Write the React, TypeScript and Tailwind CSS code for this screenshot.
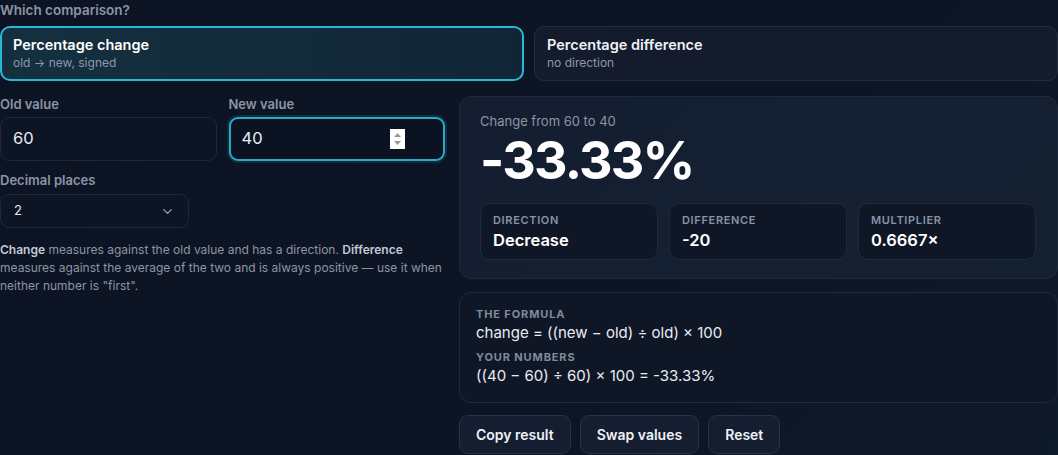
import { ChevronDown } from "lucide-react";

const font = { fontFamily: "Inter, 'Noto Sans', sans-serif" };

function Stat({ label, value }: { label: string; value: string }) {
  return (
    <div className="h-[57px] rounded-[10px] border border-[#1f2a3d] bg-[#0f1727] px-3 pt-[9px]">
      <div className="text-[11px] font-semibold uppercase leading-[14px] tracking-[0.06em] text-[#8793a6]">{label}</div>
      <div className="mt-[2px] text-[16.5px] font-semibold leading-[22px] text-white">{value}</div>
    </div>
  );
}

export default function App() {
  return (
    <div
      style={font}
      className="h-[455px] w-[1058px] overflow-hidden bg-[linear-gradient(135deg,#0c1322_0%,#0d1424_60%,#0f1a28_100%)] text-white"
    >
      <div className="pt-[1px] text-[13.5px] font-semibold leading-[18px] text-[#8b95a7]">Which comparison?</div>

      <div className="mt-[7px] grid grid-cols-2 gap-[10px]">
        <div className="h-[55px] rounded-[10px] border-2 border-[#2bb8d6] bg-[linear-gradient(90deg,#14303f_0%,#132a3b_60%,#112536_100%)] px-[11px] pt-[8px]">
          <div className="text-[14.5px] font-semibold leading-[18px] text-white">Percentage change</div>
          <div className="text-[12px] leading-[17px] text-[#8c98aa]">old → new, signed</div>
        </div>
        <div className="h-[55px] rounded-[10px] border border-[#222d40] bg-[#131b2c] px-[12px] pt-[9px]">
          <div className="text-[14.5px] font-semibold leading-[18px] text-[#eef2f7]">Percentage difference</div>
          <div className="text-[12px] leading-[17px] text-[#8c98aa]">no direction</div>
        </div>
      </div>

      <div className="mt-[15px] grid grid-cols-[445px_599px] gap-[14px]">
        <div>
          <div className="grid grid-cols-2 gap-[12px]">
            <div>
              <div className="text-[13px] font-semibold leading-[16px] text-[#8b95a7]">Old value</div>
              <div className="mt-[5px] flex h-[44px] items-center rounded-[9px] border border-[#1e2839] bg-[#0d1424] px-[12px] pb-[2px] text-[16.5px] text-[#e8edf3]">
                60
              </div>
            </div>
            <div>
              <div className="text-[13px] font-semibold leading-[16px] text-[#8b95a7]">New value</div>
              <div className="mt-[5px] flex h-[44px] items-center justify-between rounded-[9px] border-2 border-[#2aa9c6] bg-[#0b1322] pl-[11px] pr-[38px] text-[16.5px] text-[#e8edf3] shadow-[0_0_0_2px_rgba(34,160,190,0.18)]">
                <span className="pb-[2px]">40</span>
                <svg width="15" height="20" viewBox="0 0 15 20">
                  <rect width="15" height="20" fill="#ffffff" />
                  <path d="M4 8 L7.5 4 L11 8 Z" fill="#9a9a9a" />
                  <path d="M4 12 L7.5 16 L11 12 Z" fill="#9a9a9a" />
                </svg>
              </div>
            </div>
          </div>

          <div className="mt-[10px] text-[13px] font-semibold leading-[18px] text-[#8b95a7]">Decimal places</div>
          <div className="mt-[5px] flex h-[34px] w-[189px] items-center justify-between rounded-[9px] border border-[#1e2839] bg-[#0d1424] pl-[13px] pr-[13px] text-[13px] text-[#e8edf3]">
            <span>2</span>
            <ChevronDown size={15} strokeWidth={2} className="text-[#9aa4b4]" />
          </div>

          <p className="mt-[13px] text-[12px] leading-[18px] text-[#8b95a7]">
            <b className="font-semibold text-[#c3cad5]">Change</b> measures against the old value and has a direction.{" "}
            <b className="font-semibold text-[#c3cad5]">Difference</b> measures against the average of the two and is always positive — use it when neither number is "first".
          </p>
        </div>

        <div>
          <div className="h-[183px] rounded-[12px] border border-[#1f2a3d] bg-[linear-gradient(135deg,#141d30_0%,#152033_60%,#13202f_100%)] px-[20px] pt-[15px]">
            <div className="text-[13px] leading-[18px] text-[#8b95a7]">Change from 60 to 40</div>
            <div className="mt-[-1px] text-[52px] font-bold leading-[63px] tracking-[-0.035em] text-white">-33.33%</div>
            <div className="mt-[11px] grid grid-cols-3 gap-[11px] pr-[1px]">
              <Stat label="Direction" value="Decrease" />
              <Stat label="Difference" value="-20" />
              <Stat label="Multiplier" value="0.6667×" />
            </div>
          </div>

          <div className="mt-[13px] h-[111px] rounded-[12px] border border-[#1f2a3d] bg-[#0f1727] px-[16px] pt-[14px]">
            <div className="text-[11px] font-bold uppercase leading-[14px] tracking-[0.08em] text-[#7f8a9c]">The formula</div>
            <div className="mt-[2px] text-[15px] leading-[20px] text-[#e8edf3]">change = ((new − old) ÷ old) × 100</div>
            <div className="mt-[7px] text-[11px] font-bold uppercase leading-[14px] tracking-[0.08em] text-[#7f8a9c]">Your numbers</div>
            <div className="mt-[2px] text-[15px] leading-[20px] text-[#e8edf3]">((40 − 60) ÷ 60) × 100 = -33.33%</div>
          </div>

          <div className="mt-[12px] flex gap-[9px]">
            {["Copy result", "Swap values", "Reset"].map((t) => (
              <div
                key={t}
                className="flex h-[39px] items-center rounded-[9px] border border-[#263246] bg-[#151e30] px-[16px] text-[14px] font-semibold text-[#eef2f7]"
              >
                {t}
              </div>
            ))}
          </div>
        </div>
      </div>
    </div>
  );
}
